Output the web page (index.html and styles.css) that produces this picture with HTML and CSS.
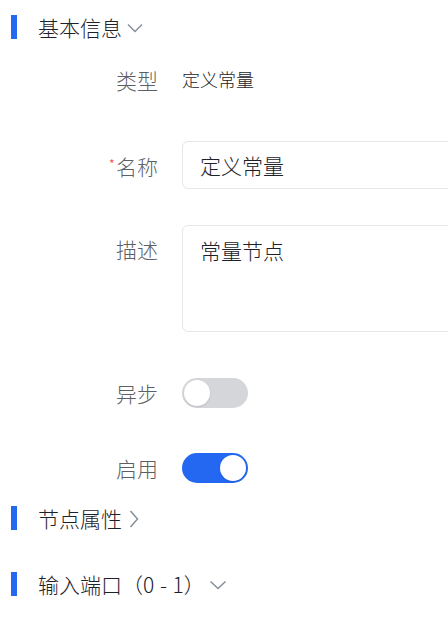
FILE: index.html
```html
<!DOCTYPE html>
<html lang="zh-CN">
<head>
<meta charset="utf-8">
<link rel="stylesheet" href="styles.css">
</head>
<body>
<div class="page">
  <div class="section-head head-1">
    <span class="bar"></span>
    <span class="title">基本信息</span>
    <svg class="chev-down" width="16" height="10" viewBox="0 0 16 10"><path d="M1 1.5 L8 8.5 L15 1.5" fill="none" stroke="#86909c" stroke-width="1.5"/></svg>
  </div>

  <div class="form">
    <div class="row row-type">
      <div class="label">类型</div>
      <div class="value">定义常量</div>
    </div>
    <div class="row row-name">
      <div class="label"><span class="req">*</span>名称</div>
      <div class="input">定义常量</div>
    </div>
    <div class="row row-desc">
      <div class="label label-top">描述</div>
      <div class="textarea">常量节点</div>
    </div>
    <div class="row row-async">
      <div class="label">异步</div>
      <div class="switch"><span class="knob"></span></div>
    </div>
    <div class="row row-enable">
      <div class="label">启用</div>
      <div class="switch on"><span class="knob"></span></div>
    </div>
  </div>

  <div class="section-head head-2">
    <span class="bar"></span>
    <span class="title">节点属性</span>
    <svg class="chev-right" width="10" height="18" viewBox="0 0 10 18"><path d="M1.5 1 L8.5 9 L1.5 17" fill="none" stroke="#86909c" stroke-width="1.5"/></svg>
  </div>

  <div class="section-head head-3">
    <span class="bar"></span>
    <span class="title title-latin">输入端口（0 - 1）</span>
    <svg class="chev-down" width="18" height="10" viewBox="0 0 18 10"><path d="M1.5 1.5 L9 8.5 L16.5 1.5" fill="none" stroke="#86909c" stroke-width="1.5"/></svg>
  </div>
</div>
</body>
</html>
```

FILE: styles.css
```css
html, body {
  margin: 0;
  padding: 0;
  background: #ffffff;
  overflow: hidden;
}

body {
  font-family: "Noto Sans CJK SC", "Noto Sans", sans-serif;
  font-weight: 300;
  color: #1d2129;
}

.page {
  width: 448px;
  height: 621px;
  overflow: hidden;
  padding-top: 3px;
  box-sizing: border-box;
}

.section-head {
  height: 48px;
  display: flex;
  align-items: center;
  padding-left: 11px;
}

.bar {
  width: 6px;
  height: 24px;
  background: #2468f2;
  margin-right: 21px;
  flex: none;
}

.title {
  font-size: 21px;
  line-height: 32px;
  color: #1d2129;
  white-space: nowrap;
}

.title-latin {
  word-spacing: 1px;
}

.chev-down {
  margin-left: 5px;
  margin-top: 2px;
}

.head-3 .chev-down {
  margin-left: 4px;
}

.chev-right {
  margin-left: 7px;
  margin-top: 2px;
}

.form {
  padding-top: 5px;
}

.row {
  display: flex;
  align-items: center;
  min-height: 48px;
}

.row-type { margin-bottom: 37px; }
.row-name { margin-bottom: 36px; }
.row-desc { margin-bottom: 37px; align-items: flex-start; }
.row-async { margin-bottom: 27px; }
.row-enable { margin-bottom: 2px; }
.head-3 { margin-top: 18px; }

.label {
  width: 158px;
  flex: none;
  text-align: right;
  font-size: 21px;
  line-height: 32px;
  color: #5c5f66;
  margin-right: 24px;
  white-space: nowrap;
}

.label-top {
  padding-top: 8px;
}

.req {
  color: #f53f3f;
  font-size: 14px;
  vertical-align: 5px;
  margin-right: 1px;
}

.value {
  font-size: 18px;
  line-height: 28px;
  color: #1d2129;
  margin-top: -3px;
}

.input {
  width: 300px;
  height: 48px;
  box-sizing: border-box;
  border: 1px solid #e5e6eb;
  border-radius: 6px;
  padding: 0 17px;
  font-size: 21px;
  line-height: 46px;
  color: #1d2129;
  flex: none;
}

.textarea {
  width: 300px;
  height: 107px;
  box-sizing: border-box;
  border: 1px solid #e5e6eb;
  border-radius: 6px;
  padding: 8px 17px;
  font-size: 21px;
  line-height: 32px;
  color: #1d2129;
  flex: none;
}

.switch {
  width: 66px;
  height: 30px;
  border-radius: 15px;
  background: #d5d6da;
  position: relative;
  flex: none;
}

.switch.on {
  background: #2468f2;
}

.knob {
  position: absolute;
  top: 2px;
  left: 2px;
  width: 26px;
  height: 26px;
  border-radius: 50%;
  background: #ffffff;
  box-shadow: 0 1px 2px rgba(0, 0, 0, 0.12);
}

.switch.on .knob {
  left: 38px;
}
```
